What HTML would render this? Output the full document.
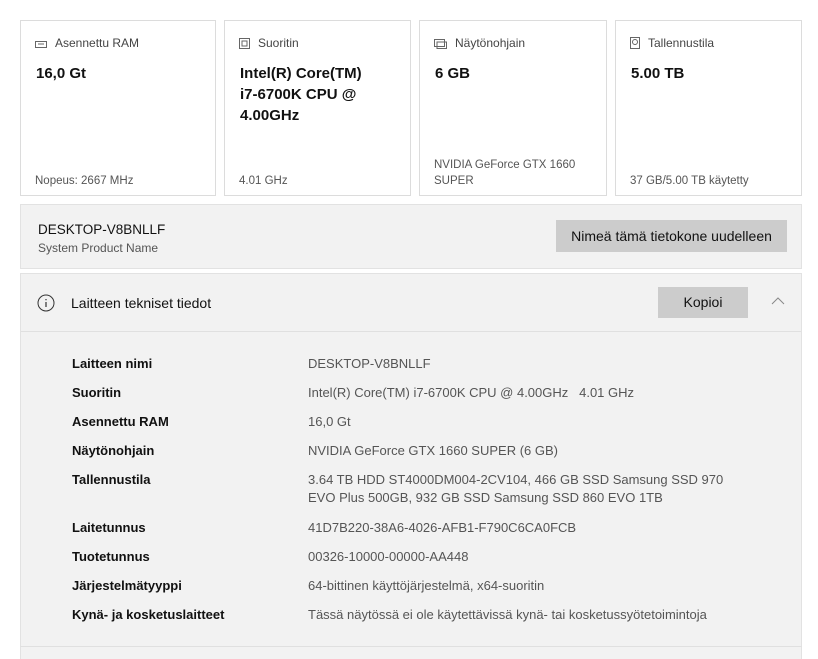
<!DOCTYPE html><html><head><style>
html,body{margin:0;width:818px;height:659px;overflow:hidden}
body{background:#fff;font-family:"Liberation Sans",sans-serif;position:relative}
.c{position:absolute;top:20px;height:176px;border:1px solid #dcdcdc;background:#fff;box-sizing:border-box}
.l{position:absolute;left:14px;top:15px;font-size:12px;color:#444}
.l svg{vertical-align:-2px;margin-right:8px}
.v{position:absolute;left:15px;top:42px;font-size:15px;font-weight:bold;color:#111;line-height:21px}
.f{position:absolute;left:14px;bottom:6px;font-size:11.5px;color:#555;line-height:16px}
.p{position:absolute;left:20px;width:782px;background:#f2f2f2;border:1px solid #e2e2e2;box-sizing:border-box}
.b{position:absolute;background:#cccccc;font-size:14px;color:#111;text-align:center}
.r{position:absolute;font-size:13px;line-height:18px}
.k{left:72px;font-weight:bold;color:#111}
.w{left:308px;color:#555;width:450px}
</style></head><body>
<div class="c" style="left:20px;width:196px"><div class="l"><svg width="12" height="8"><rect x=".5" y=".5" width="11" height="6" fill="none" stroke="#666"/><path d="M3 3h6" stroke="#666"/></svg>Asennettu RAM</div><div class="v">16,0 Gt</div><div class="f">Nopeus: 2667 MHz</div></div>
<div class="c" style="left:224px;width:187px"><div class="l"><svg width="11" height="11"><rect x=".5" y=".5" width="10" height="10" fill="none" stroke="#666"/><rect x="3" y="3" width="5" height="5" fill="none" stroke="#666"/></svg>Suoritin</div><div class="v">Intel(R) Core(TM)<br>i7-6700K CPU @<br>4.00GHz</div><div class="f">4.01 GHz</div></div>
<div class="c" style="left:419px;width:188px"><div class="l"><svg width="13" height="10"><rect x=".5" y=".5" width="10" height="7" fill="none" stroke="#666"/><rect x="3" y="3" width="9.5" height="6.5" fill="none" stroke="#666"/></svg>Näytönohjain</div><div class="v">6 GB</div><div class="f">NVIDIA GeForce GTX 1660<br>SUPER</div></div>
<div class="c" style="left:615px;width:187px"><div class="l"><svg width="10" height="12"><rect x=".5" y=".5" width="9" height="11" fill="none" stroke="#666"/><circle cx="5" cy="5" r="2.5" fill="none" stroke="#666"/></svg>Tallennustila</div><div class="v">5.00 TB</div><div class="f">37 GB/5.00 TB käytetty</div></div>
<div class="p" style="top:204px;height:65px"><div style="position:absolute;left:17px;top:17px;font-size:13.5px;color:#111">DESKTOP-V8BNLLF</div><div style="position:absolute;left:17px;top:36px;font-size:12px;color:#555">System Product Name</div><div class="b" style="left:535px;top:15px;width:231px;height:32px;line-height:32px">Nimeä tämä tietokone uudelleen</div></div>
<div class="p" style="top:273px;height:400px"><div style="position:absolute;left:0;right:0;top:0;height:57px;border-bottom:1px solid #e0e0e0"></div>
<svg style="position:absolute;left:16px;top:20px" width="18" height="18"><circle cx="9" cy="9" r="8" fill="none" stroke="#333"/><path d="M9 8v5M9 5v1.3" stroke="#333" stroke-width="1.2"/></svg>
<div style="position:absolute;left:50px;top:21px;font-size:14px;color:#111">Laitteen tekniset tiedot</div>
<div class="b" style="left:637px;top:13px;width:90px;height:31px;line-height:31px">Kopioi</div>
<svg style="position:absolute;left:750px;top:22px" width="14" height="9"><path d="M1 8l6-6 6 6" fill="none" stroke="#888"/></svg></div>
<div class="r k" style="top:355px">Laitteen nimi</div><div class="r w" style="top:355px">DESKTOP-V8BNLLF</div>
<div class="r k" style="top:384px">Suoritin</div><div class="r w" style="top:384px">Intel(R) Core(TM) i7-6700K CPU @ 4.00GHz &nbsp; 4.01 GHz</div>
<div class="r k" style="top:413px">Asennettu RAM</div><div class="r w" style="top:413px">16,0 Gt</div>
<div class="r k" style="top:442px">Näytönohjain</div><div class="r w" style="top:442px">NVIDIA GeForce GTX 1660 SUPER (6 GB)</div>
<div class="r k" style="top:471px">Tallennustila</div><div class="r w" style="top:471px;width:435px">3.64 TB HDD ST4000DM004-2CV104, 466 GB SSD Samsung SSD 970 EVO Plus 500GB, 932 GB SSD Samsung SSD 860 EVO 1TB</div>
<div class="r k" style="top:519px">Laitetunnus</div><div class="r w" style="top:519px">41D7B220-38A6-4026-AFB1-F790C6CA0FCB</div>
<div class="r k" style="top:548px">Tuotetunnus</div><div class="r w" style="top:548px">00326-10000-00000-AA448</div>
<div class="r k" style="top:577px">Järjestelmätyyppi</div><div class="r w" style="top:577px">64-bittinen käyttöjärjestelmä, x64-suoritin</div>
<div class="r k" style="top:606px">Kynä- ja kosketuslaitteet</div><div class="r w" style="top:606px;width:480px">Tässä näytössä ei ole käytettävissä kynä- tai kosketussyötetoimintoja</div>
<div style="position:absolute;left:20px;width:782px;top:646px;border-top:1px solid #e0e0e0"></div>
</body></html>
